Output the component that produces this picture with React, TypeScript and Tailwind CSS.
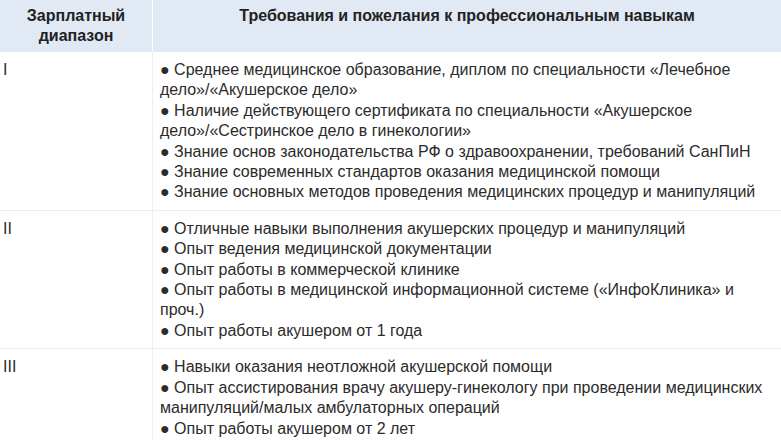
const rows = [
  {
    range: 'I',
    items: [
      'Среднее медицинское образование, диплом по специальности «Лечебное дело»/«Акушерское дело»',
      'Наличие действующего сертификата по специальности «Акушерское дело»/«Сестринское дело в гинекологии»',
      'Знание основ законодательства РФ о здравоохранении, требований СанПиН',
      'Знание современных стандартов оказания медицинской помощи',
      'Знание основных методов проведения медицинских процедур и манипуляций',
    ],
  },
  {
    range: 'II',
    items: [
      'Отличные навыки выполнения акушерских процедур и манипуляций',
      'Опыт ведения медицинской документации',
      'Опыт работы в коммерческой клинике',
      'Опыт работы в медицинской информационной системе («ИнфоКлиника» и проч.)',
      'Опыт работы акушером от 1 года',
    ],
  },
  {
    range: 'III',
    items: [
      'Навыки оказания неотложной акушерской помощи',
      'Опыт ассистирования врачу акушеру-гинекологу при проведении медицинских манипуляций/малых амбулаторных операций',
      'Опыт работы акушером от 2 лет',
    ],
  },
];

export default function App() {
  return (
    <div className="w-[781px] h-[440px] overflow-hidden bg-white font-['Liberation_Sans',Arial,sans-serif] text-[16px] leading-[20.4px] text-[#2b2b2b]">
      <div className="grid grid-cols-[153px_1fr] bg-[#e1e9f5] text-[#222] font-bold h-[52px]">
        <div className="text-center pt-[6px] border-r border-white">
          Зарплатный
          <br />
          диапазон
        </div>
        <div className="text-center pt-[6px]">Требования и пожелания к профессиональным навыкам</div>
      </div>
      {rows.map((row) => (
        <div key={row.range} className="grid grid-cols-[153px_1fr] border-b border-[#eceef1]">
          <div className="pl-[3px] pt-[8px] border-r border-[#eceef1]">{row.range}</div>
          <div className="pl-[7px] pr-[6px] pt-[8px] pb-[7px]">
            {row.items.map((item) => (
              <div key={item}>● {item}</div>
            ))}
          </div>
        </div>
      ))}
    </div>
  );
}
